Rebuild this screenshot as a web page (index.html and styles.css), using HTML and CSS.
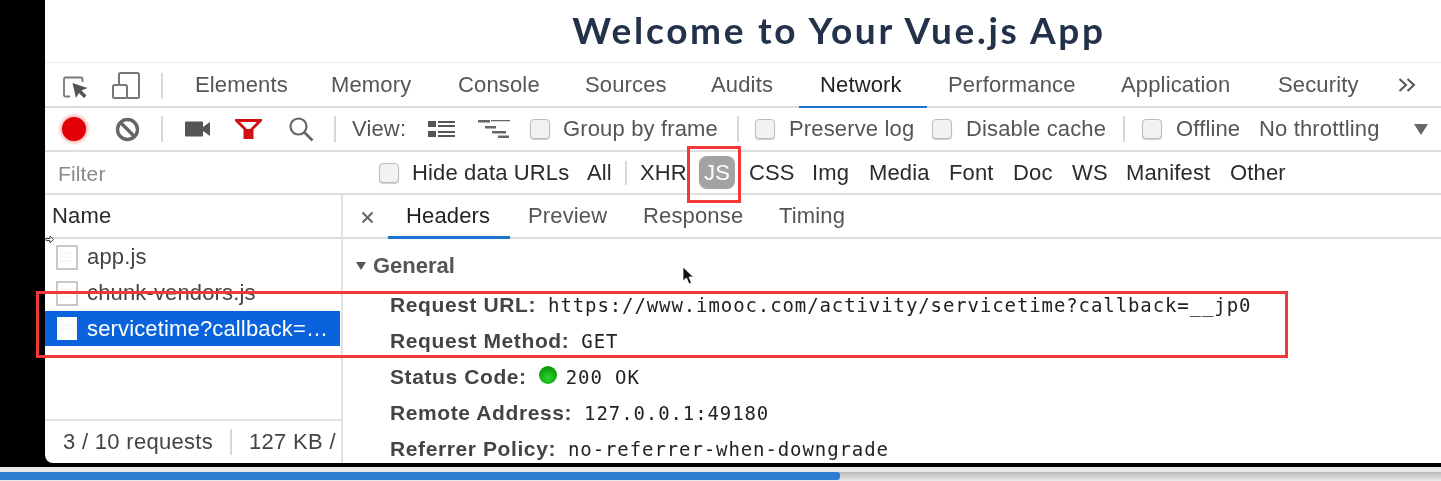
FILE: index.html
```html
<!DOCTYPE html>
<html lang="en">
<head>
<meta charset="utf-8">
<title>Welcome to Your Vue.js App</title>
<link rel="stylesheet" href="styles.css">
</head>
<body>
<div class="screen">
<div class="app">
  <h1 class="title">Welcome to Your Vue.js App</h1>
  <nav class="tabs">
    <div class="tab-icons">
      <svg class="ic-inspect" width="25" height="22" viewBox="0 0 25 22"><path d="M7 20.500H2.500A1.500 1.500 0 0 1 1 19V3a1.500 1.500 0 0 1 1.500-1.500H18A1.500 1.500 0 0 1 19.500 3v3" fill="none" stroke="#777" stroke-width="1.800"/><path d="M9.500 7l15 5-6 2.500 5 5-2.500 2.500-5-5L13 22z" fill="#555"/></svg>
      <svg class="ic-device" width="28" height="27" viewBox="0 0 28 27"><path d="M7 12V2.500A1.500 1.500 0 0 1 8.500 1h17A1.500 1.500 0 0 1 27 2.500v22a1.500 1.500 0 0 1-1.500 1.500H15" fill="none" stroke="#777" stroke-width="2"/><rect x="1" y="13" width="14" height="13" rx="1.500" fill="none" stroke="#777" stroke-width="2"/></svg>
      <span class="sep"></span>
    </div>
    <div class="tab">Elements</div>
    <div class="tab">Memory</div>
    <div class="tab">Console</div>
    <div class="tab">Sources</div>
    <div class="tab">Audits</div>
    <div class="tab tab-active">Network</div>
    <div class="tab">Performance</div>
    <div class="tab">Application</div>
    <div class="tab">Security</div>
    <div class="tab tab-more">
      <svg class="more-icon" width="18" height="14" viewBox="0 0 18 14"><path d="M1.500 1 8 7l-6.500 6M9.500 1 16 7l-6.500 6" fill="none" stroke="#555" stroke-width="2"/></svg>
    </div>
  </nav>
  <div class="toolbar">
    <span class="record"></span>
    <svg width="25" height="25" viewBox="0 0 25 25"><circle cx="12.500" cy="12.500" r="10" fill="none" stroke="#666" stroke-width="3.400"/><path d="M5.500 5.500l14 14" stroke="#666" stroke-width="3.400"/></svg>
    <span class="sep"></span>
    <svg width="25" height="16" viewBox="0 0 25 16"><rect x="0" y="0.500" width="18" height="15" rx="1" fill="#555"/><path d="M18 6l7-5v14l-7-5z" fill="#555"/></svg>
    <svg width="27" height="20" viewBox="0 0 27 20"><path d="M1.500 1.500h24L17 10v8.500h-7V10z" fill="#fff" stroke="#d01015" stroke-width="3"/><path d="M9 10h9v9H9z" fill="#d01015"/></svg>
    <svg width="26" height="26" viewBox="0 0 26 26"><circle cx="10.500" cy="10.500" r="8" fill="none" stroke="#666" stroke-width="2.200"/><path d="M16.500 16.500l8 8" stroke="#666" stroke-width="2.600"/></svg>
    <span class="sep"></span>
    <span class="label">View:</span>
    <svg width="27" height="17" viewBox="0 0 27 17"><path d="M0 0h8v6H0zM0 10h8v6H0zM10 0h17v2H10zM10 4h17v2H10zM10 10h17v2H10zM10 14h17v2H10z" fill="#555"/></svg>
    <svg width="32" height="18" viewBox="0 0 32 18"><path d="M0 0h12v2.500H0zM13 0h19v1.200H13zM7 6h11v2.500H7zM14 11h14v2.500H14zM20 15.500h11V18H20z" fill="#666"/></svg>
    <span class="check"></span>
    <span class="label">Group by frame</span>
    <span class="sep"></span>
    <span class="check"></span>
    <span class="label">Preserve log</span>
    <span class="check"></span>
    <span class="label">Disable cache</span>
    <span class="sep"></span>
    <span class="check"></span>
    <span class="label">Offline</span>
    <span class="label">No throttling</span>
    <span class="caret-large"></span>
  </div>
  <div class="filters">
    <span class="filter-input">Filter</span>
    <span class="check"></span>
    <span>Hide data URLs</span>
    <span>All</span>
    <span class="sep sep-short"></span>
    <span>XHR</span>
    <span class="pill">JS</span>
    <span>CSS</span>
    <span>Img</span>
    <span>Media</span>
    <span>Font</span>
    <span>Doc</span>
    <span>WS</span>
    <span>Manifest</span>
    <span>Other</span>
  </div>
  <div class="main">
    <section class="list">
      <div class="list-head">Name</div>
      <div class="list-rows">
        <div class="row"><svg class="file" width="22" height="25" viewBox="0 0 22 25"><rect x="1" y="1" width="20" height="23" fill="#fff" stroke="#bbb" stroke-width="1.600"/><path d="M4 8h12M4 12h10M4 16h12" stroke="#f0f0f0"/></svg>app.js</div>
        <div class="row"><svg class="file" width="22" height="25" viewBox="0 0 22 25"><rect x="1" y="1" width="20" height="23" fill="#fff" stroke="#bbb" stroke-width="1.600"/><path d="M4 8h12M4 12h10M4 16h12" stroke="#f0f0f0"/></svg>chunk-vendors.js</div>
        <div class="row row-selected"><svg class="file" width="20" height="23" viewBox="0 0 20 23"><rect x="0" y="0" width="20" height="23" fill="#fff"/><path d="M4 8h12M4 12h10" stroke="#e6eefb"/></svg>servicetime?callback=…</div>
      </div>
      <div class="status"><span>3 / 10 requests</span><span class="sep"></span><span>127 KB /</span></div>
    </section>
    <section class="detail">
      <div class="detail-tabs">
        <svg class="close" width="13" height="13" viewBox="0 0 13 13"><path d="M1.500 1.500l10 10M11.500 1.500l-10 10" stroke="#666" stroke-width="2"/></svg>
        <div class="dtab dtab-active">Headers</div>
        <div class="dtab">Preview</div>
        <div class="dtab">Response</div>
        <div class="dtab">Timing</div>
      </div>
      <div class="general"><span class="caret"></span>General</div>
      <div class="kv"><b>Request URL:</b><span>https://www.imooc.com/activity/servicetime?callback=__jp0</span></div>
      <div class="kv"><b>Request Method:</b><span>GET</span></div>
      <div class="kv"><b>Status Code:</b><i class="dot"></i><span>200 OK</span></div>
      <div class="kv"><b>Remote Address:</b><span>127.0.0.1:49180</span></div>
      <div class="kv"><b>Referrer Policy:</b><span>no-referrer-when-downgrade</span></div>
    </section>
  </div>
  <svg class="cursor" width="12" height="19" viewBox="0 0 12 19"><path d="M1 1v14l3.500-3 2.500 6 2.500-1-2.500-6h4.500z" fill="#111" stroke="#fff" stroke-width=".8"/></svg>
  <svg class="resize" width="9" height="9" viewBox="0 0 9 9"><path d="M1 3.500h4V1l3.500 3.500L5 8V5.500H1z" fill="#fff" stroke="#333" stroke-width=".9"/></svg>
</div>
<span class="redbox redbox-js"></span>
<span class="redbox redbox-rows"></span>
</div>
<div class="progress"><div class="track"><div class="progress-fill" style="width:840px"></div></div></div>
</body>
</html>
```

FILE: styles.css
```css
* { box-sizing: border-box; }
html, body { margin: 0; height: 481px; overflow: hidden; background: #000; }
body { font-family: "Liberation Sans", Arial, sans-serif; font-size: 22px; letter-spacing: .15px; color: #444; }

.screen { position: relative; }

.app {
  position: relative;
  margin-left: 45px;
  height: 463px;
  background: #fff;
  border-bottom-left-radius: 8px;
  overflow: hidden;
  filter: blur(.4px);
}

.title {
  margin: 0;
  height: 63px;
  padding: 10px 0 0 192px;
  text-align: center;
  font-family: Lato, sans-serif;
  font-weight: 700;
  font-size: 37px;
  line-height: 40px;
  letter-spacing: 2.700px;
  color: #23324a;
  border-bottom: 1px solid #ececec;
}

.sep { display: block; width: 2px; height: 26px; background: #d8d8d8; }
.sep-short { height: 24px; }

.tabs {
  display: grid;
  grid-template-columns: 129px 136px 127px 127px 126px 109px 128px 173px 157px 120px auto;
  align-items: stretch;
  height: 45px;
  border-bottom: 2px solid #dcdcdc;
  color: #555;
}
.tab-icons { display: flex; align-items: center; padding-left: 18px; }
.ic-inspect { margin: 3px 24px 0 0; }
.ic-device { margin-right: 21px; }
.tab { padding: 9px 0 0 21px; line-height: 26px; height: 45px; white-space: nowrap; }
.tab-active { color: #222; border-bottom: 2px solid #1a73d0; }
.tab-more { padding: 15px 0 0 21px; }
.more-icon { display: block; }

.toolbar {
  display: grid;
  grid-template-columns: 53px 46px 24px 50px 53px 46px 18px 76px 50px 52px 33px 174px 18px 34px 143px 34px 157px 19px 34px 83px 155px auto;
  align-items: center;
  justify-items: start;
  height: 44px;
  padding-left: 17px;
  border-bottom: 2px solid #dedede;
  color: #555;
}
.record {
  width: 24px;
  height: 24px;
  border-radius: 50%;
  background: #e00006;
  box-shadow: 0 0 4px 1px #f38a8a;
}
.check {
  display: block;
  width: 20px;
  height: 20px;
  border: 1px solid #bdbdbd;
  border-radius: 4px;
  background: #f2f2f2;
  box-shadow: 0 1px 1px #ccc;
}
.label { white-space: nowrap; }
.caret-large {
  width: 0;
  height: 0;
  border-left: 7px solid transparent;
  border-right: 7px solid transparent;
  border-top: 11px solid #666;
}

.filters {
  display: grid;
  grid-template-columns: 321px 33px 175px 38px 15px 59px 50px 63px 57px 80px 64px 59px 54px 104px auto;
  align-items: center;
  justify-items: start;
  height: 43px;
  padding-left: 13px;
  border-bottom: 2px solid #dedede;
  color: #2a2a2a;
}
.filter-input { color: #8a8a8a; font-size: 21px; padding-top: 3px; }
.pill {
  width: 36px;
  height: 33px;
  border-radius: 8px;
  background: #a3a3a3;
  color: #fff;
  line-height: 33px;
  text-align: center;
}

.main { display: flex; height: 268px; }
.list {
  display: flex;
  flex-direction: column;
  width: 298px;
  border-right: 2px solid #e2e2e2;
}
.list-head {
  height: 44px;
  padding: 8px 0 0 7px;
  line-height: 26px;
  color: #2a2a2a;
  border-bottom: 2px solid #dcdcdc;
}
.list-rows { flex: 1; }
.row {
  display: flex;
  align-items: center;
  gap: 9px;
  height: 36px;
  padding-left: 11px;
  white-space: nowrap;
}
.row-selected {
  height: 35px;
  margin-right: 1px;
  gap: 10px;
  padding-left: 12px;
  background: #0a63dc;
  color: #fff;
}
.status {
  display: flex;
  align-items: center;
  gap: 17px;
  height: 44px;
  padding-left: 18px;
  letter-spacing: .3px;
  border-top: 2px solid #e2e2e2;
  white-space: nowrap;
}

.detail { flex: 1; min-width: 0; color: #555; }
.detail-tabs {
  display: grid;
  grid-template-columns: 45px 122px 115px 136px auto;
  align-items: stretch;
  height: 44px;
  border-bottom: 2px solid #dcdcdc;
}
.close { align-self: center; margin: 0 0 0 18px; }
.dtab { padding: 8px 0 0 18px; line-height: 26px; white-space: nowrap; }
.dtab-active { color: #222; height: 44px; border-bottom: 3px solid #1a73d0; }

.general {
  display: flex;
  align-items: center;
  gap: 7px;
  height: 36px;
  margin-top: 9px;
  padding-left: 13px;
  font-weight: 700;
  font-size: 22px;
  letter-spacing: 0;
  color: #555;
}
.caret {
  width: 0;
  height: 0;
  border-left: 5.500px solid transparent;
  border-right: 5.500px solid transparent;
  border-top: 8px solid #555;
}
.kv {
  display: flex;
  align-items: center;
  gap: 12px;
  height: 36px;
  padding-left: 47px;
  white-space: nowrap;
  color: #222;
}
.kv b { font-size: 21px; color: #444; letter-spacing: .6px; }
.kv span { font-family: "DejaVu Sans Mono", monospace; font-size: 19px; letter-spacing: .9px; }
.general + .kv { margin-top: 3px; }
.dot {
  width: 18px;
  height: 18px;
  margin: -4px -3px 0 0;
  border-radius: 50%;
  background: radial-gradient(circle at 50% 65%, #2ed62e, #0a9a0a 70%);
}

.redbox { position: absolute; border: 3px solid #f23838; pointer-events: none; }
.redbox-js { left: 687px; top: 146px; width: 54px; height: 57px; }
.redbox-rows { left: 36px; top: 291px; width: 1252px; height: 67px; }
.cursor { position: absolute; left: 637px; top: 266px; }
.resize { position: absolute; left: 0; top: 235px; }

.progress { height: 18px; margin-top: 4px; background: #e9e9e9; padding-top: 5px; }
.track { height: 8px; background: linear-gradient(#b9b9b9, #e2e2e2); }
.progress-fill { height: 8px; background: #2d7fd3; border-radius: 0 3px 3px 0; }
```
